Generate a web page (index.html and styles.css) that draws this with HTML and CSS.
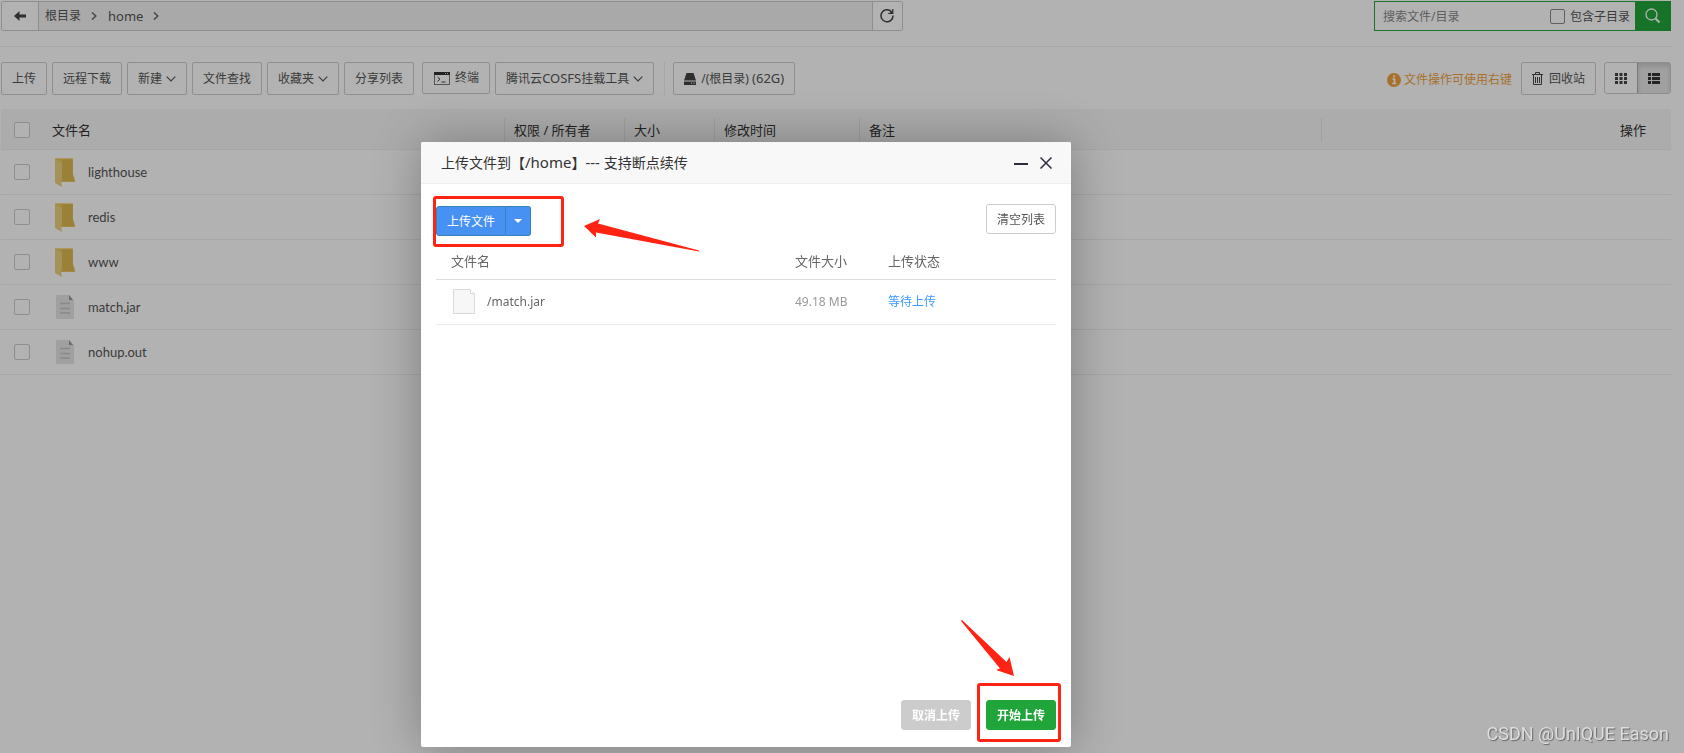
FILE: index.html
```html
<!DOCTYPE html>
<html lang="zh-CN">
<head>
<meta charset="utf-8">
<title>文件管理</title>
<link rel="stylesheet" href="styles.css">
</head>
<body>
<svg class="defs" aria-hidden="true">
  <symbol id="folder" viewBox="0 0 20 29">
    <path d="M0 0h18v16l2 6v2H6L0 22z" fill="#e9c75d"/>
    <path d="M7 1.500h10.500v15l1.500 6.500H7z" fill="#dfb84f"/>
    <path d="M0 1l7 4v15l-1 3 1 6L0 25z" fill="#ecd27f"/>
    <path d="M0 0h18v1H0z" fill="#f5dc8c"/>
  </symbol>
  <symbol id="doc" viewBox="0 0 18 24">
    <path d="M0 0h13l5 5v19H0z" fill="#e6e6e6"/>
    <path d="M13 0l4 5h-4z" fill="#999"/>
    <path d="M4 8.500h10M4 13.500h10M4 18h10" stroke="#c4c4c4" stroke-width="1.500"/>
  </symbol>
  <symbol id="down" viewBox="0 0 10 6"><path d="M.7.7L5 5 9.300.7" fill="none" stroke="#555" stroke-width="1.200"/></symbol>
  <symbol id="next" viewBox="0 0 6 8"><path d="M1 .5L4.800 4 1 7.500" fill="none" stroke="#666" stroke-width="1.500"/></symbol>
</svg>
<div class="page">
  <header class="topbar">
    <nav class="path">
      <button class="path-btn back" aria-label="后退"><svg width="12" height="10" viewBox="0 0 12 10"><path d="M0 5l5.500-5v3.500H12v3H5.500V10z" fill="#444"/></svg></button>
      <div class="crumbs">
        <a href="#">根目录</a><svg width="6" height="8"><use href="#next"/></svg>
        <a href="#" class="home">home</a><svg width="6" height="8"><use href="#next"/></svg>
      </div>
      <button class="path-btn refresh" aria-label="刷新"><svg width="14" height="14" viewBox="0 0 14 14"><path d="M11.200 2.500A6 6 0 1 0 13 6.500" fill="none" stroke="#444" stroke-width="1.500"/><path d="M12.800 0v4.500H8.200" fill="none" stroke="#444" stroke-width="1.200"/><path d="M12.500 1v3H9.500z" fill="#444"/></svg></button>
    </nav>
    <form class="search">
      <input type="text" class="search-text" placeholder="搜索文件/目录" aria-label="搜索文件/目录">
      <label class="search-sub"><input type="checkbox" class="check">包含子目录</label>
      <button type="button" class="search-btn" aria-label="搜索"><svg width="16" height="16" viewBox="0 0 16 16" fill="none" stroke="#fff"><circle cx="6.500" cy="6.500" r="5.500" stroke-width="1.300"/><path d="M10.500 10.500L14.500 14.500" stroke-width="2"/></svg></button>
    </form>
  </header>

  <div class="toolbar">
    <div class="tools">
      <button class="btn">上传</button>
      <button class="btn">远程下载</button>
      <button class="btn">新建<svg width="10" height="6"><use href="#down"/></svg></button>
      <button class="btn">文件查找</button>
      <button class="btn">收藏夹<svg width="10" height="6"><use href="#down"/></svg></button>
      <button class="btn">分享列表</button>
      <button class="btn terminal"><svg width="16" height="13" viewBox="0 0 16 13"><rect x=".5" y=".5" width="15" height="12" fill="none" stroke="#777"/><path d="M0 0h16v3H0z" fill="#333"/><path d="M3.500 5l2.500 2.200-2.500 2.200M7.500 10h4" fill="none" stroke="#444"/><path d="M11 1.500h3" stroke="#ccc" stroke-dasharray="1 1"/></svg>终端</button>
      <button class="btn"><span>腾讯云<span class="latin">COSFS</span>挂载工具</span><svg width="10" height="6"><use href="#down"/></svg></button>
      <span class="divider"></span>
      <button class="btn disk"><svg width="12" height="12" viewBox="0 0 12 12" fill="#444"><path d="M2.500 0h7L12 7.500H0z"/><path d="M0 8.500h12V12H0z"/><path d="M7 10.200h1.200M9.500 10.200h1.200" stroke="#fff"/></svg><span>/(根目录) <span class="latin">(62G)</span></span></button>
    </div>
    <div class="tools-right">
      <span class="tip"><svg width="14" height="14" viewBox="0 0 14 14"><circle cx="7" cy="7" r="7" fill="#f0a33f"/><path d="M5.500 6h2v4.500M5.200 10.500h4M6 3.300h2" stroke="#fff" stroke-width="1.700" fill="none"/></svg>文件操作可使用右键</span>
      <button class="btn recycle"><svg width="11" height="13" viewBox="0 0 11 13" fill="none" stroke="#444"><path d="M0 2.500h11M3.500 2V.5h4V2M1.500 3v9.500h8V3M3.500 5v6M5.500 5v6M7.500 5v6"/></svg>回收站</button>
      <div class="views">
        <button class="view" aria-label="图标"><svg width="12" height="11" viewBox="0 0 12 11" fill="#444"><path d="M0 0h3v3H0zM4.500 0h3v3h-3zM9 0h3v3H9zM0 4h3v3H0zM4.500 4h3v3h-3zM9 4h3v3H9zM0 8h3v3H0zM4.500 8h3v3h-3zM9 8h3v3H9z"/></svg></button>
        <button class="view active" aria-label="列表"><svg width="12" height="11" viewBox="0 0 12 11" fill="#333"><path d="M0 0h3v3H0zM4 0h8v3H4zM0 4h3v3H0zM4 4h8v3H4zM0 8h3v3H0zM4 8h8v3H4z"/></svg></button>
      </div>
    </div>
  </div>

  <table class="files">
    <colgroup><col class="c-check"><col><col class="c-owner"><col class="c-size"><col class="c-time"><col><col class="c-ops"></colgroup>
    <thead>
      <tr>
        <th><input type="checkbox" class="check" aria-label="全选"></th>
        <th class="name-head">文件名</th>
        <th><div class="head">权限 / 所有者</div></th>
        <th><div class="head">大小</div></th>
        <th><div class="head">修改时间</div></th>
        <th><div class="head">备注</div></th>
        <th><div class="head ops">操作</div></th>
      </tr>
    </thead>
    <tbody>
      <tr><td><input type="checkbox" class="check" aria-label="lighthouse"></td><td colspan="6"><div class="file"><svg class="folder" width="20" height="29"><use href="#folder"/></svg><span>lighthouse</span></div></td></tr>
      <tr><td><input type="checkbox" class="check" aria-label="redis"></td><td colspan="6"><div class="file"><svg class="folder" width="20" height="29"><use href="#folder"/></svg><span>redis</span></div></td></tr>
      <tr><td><input type="checkbox" class="check" aria-label="www"></td><td colspan="6"><div class="file"><svg class="folder" width="20" height="29"><use href="#folder"/></svg><span>www</span></div></td></tr>
      <tr><td><input type="checkbox" class="check" aria-label="match.jar"></td><td colspan="6"><div class="file"><svg width="20" height="24"><use href="#doc"/></svg><span>match.jar</span></div></td></tr>
      <tr><td><input type="checkbox" class="check" aria-label="nohup.out"></td><td colspan="6"><div class="file"><svg width="20" height="24"><use href="#doc"/></svg><span>nohup.out</span></div></td></tr>
    </tbody>
  </table>
</div>

<div class="mask"></div>

<section class="dialog" role="dialog" aria-labelledby="dialog-title">
  <div class="dialog-head">
    <h2 id="dialog-title">上传文件到【<span class="title-latin">/home</span>】<span class="title-latin">--- </span>支持断点续传</h2>
    <button class="icon-btn" aria-label="最小化"><svg width="14" height="12" viewBox="0 0 14 12"><path d="M0 7h14" stroke="#2e2d3c" stroke-width="2"/></svg></button>
    <button class="icon-btn" aria-label="关闭"><svg width="12" height="12" viewBox="0 0 12 12"><path d="M.5.5l11 11M11.500.5l-11 11" stroke="#2e2d3c" stroke-width="1.500"/></svg></button>
  </div>
  <div class="dialog-body">
    <div class="actions">
      <div class="split"><button class="blue">上传文件</button><button class="blue caret" aria-label="更多"><svg width="8" height="4"><path d="M0 0h8L4 4z" fill="#fff"/></svg></button></div>
      <button class="small clear">清空列表</button>
    </div>
    <table class="uploads">
      <colgroup><col><col class="u-size"><col class="u-state"></colgroup>
      <thead><tr><th class="u-name">文件名</th><th>文件大小</th><th>上传状态</th></tr></thead>
      <tbody><tr>
        <td><div class="upload-file"><svg width="22" height="25" viewBox="0 0 22 25"><path d="M.5.5h17l4 4v20H.5z" fill="#f7f7f7" stroke="#d8d8d8"/><path d="M17.500.5v4h4" fill="#fff" stroke="#d8d8d8"/></svg><span>/match.jar</span></div></td>
        <td class="muted">49.18 MB</td><td class="waiting">等待上传</td>
      </tr></tbody>
    </table>
  </div>
  <div class="dialog-foot">
    <button class="small cancel">取消上传</button>
    <button class="small start">开始上传</button>
  </div>
  <span class="mark mark-upload"></span>
  <span class="mark mark-start"></span>
  <svg class="arrow arrow-upload" width="115" height="33" viewBox="0 0 115 33"><path d="M0 7L16 0 14 4.500 115 31.500v1L12 13.500v5z" fill="#ff2313"/></svg>
  <svg class="arrow arrow-start" width="53" height="56" viewBox="0 0 53 56"><path d="M53 56L35 50l4-1.500L0 1 1 0 45.500 42 48.500 37z" fill="#ff2313"/></svg>
</section>
<div class="watermark">CSDN @UnIQUE Eason</div>
</body>
</html>
```
FILE: styles.css
```css
* { box-sizing: border-box; }
body {
  margin: 0;
  min-height: 100vh;
  background: #fff;
  color: #555;
  font: 12px/20px "Noto Sans", "Noto Sans CJK SC", sans-serif;
}
button, input { font: inherit; color: inherit; margin: 0; padding: 0; }
button { background: none; border: 0; white-space: nowrap; }
a { color: inherit; text-decoration: none; }
svg { flex: none; }
.defs { position: absolute; width: 0; height: 0; }
.page { padding: 1px 13px 0 1px; }
.latin { font-size: 13px; }

.check {
  appearance: none;
  display: block;
  flex: none;
  width: 16px;
  height: 16px;
  border: 1px solid #ccc;
  border-radius: 2px;
  background: #fff;
}

.topbar {
  display: flex;
  justify-content: space-between;
  padding-bottom: 15px;
  border-bottom: 1px solid #eee;
}
.path {
  display: flex;
  width: 54%;
  height: 30px;
  border: 1px solid #ccc;
  border-radius: 2px;
  background: #f3f3f3;
}
.path-btn { display: flex; align-items: center; justify-content: center; background: #fff; }
.back { width: 37px; border-right: 1px solid #ccc; }
.refresh { width: 30px; border-left: 1px solid #ccc; }
.crumbs { flex: 1; display: flex; align-items: center; gap: 10px; padding-left: 6px; }
.home { font-size: 13px; margin-left: 1px; }
.search { display: flex; width: 297px; height: 30px; border: 1px solid #20a53a; }
.search-text { flex: 1; min-width: 0; border: 0; padding: 2px 0 0 8px; background: none; }
.search-text::placeholder { color: #888; opacity: 1; }
.search-sub { display: flex; align-items: center; gap: 5px; padding: 1px 5px 0 0; }
.search-sub .check { width: 15px; height: 15px; border-color: #888; }
.search-btn { display: flex; align-items: center; justify-content: center; width: 35px; background: #20a53a; }

.toolbar { display: flex; justify-content: space-between; padding: 15px 0 14px; }
.tools, .tools-right { display: flex; align-items: flex-start; gap: 5px; }
.btn {
  display: flex;
  align-items: center;
  gap: 4px;
  height: 33px;
  padding: 0 10px;
  border: 1px solid #ccc;
  border-radius: 2px;
  background: #fff;
}
.terminal { height: 32px; margin-left: 3px; padding-left: 11px; gap: 5px; }
.divider { width: 1px; height: 33px; margin: 0 3px 0 5px; background: #eee; }
.disk { gap: 5px; }
.tip { display: flex; align-items: center; gap: 3px; height: 33px; padding-top: 2px; margin-right: 4px; color: #f0a33f; }
.recycle { gap: 6px; }
.views { display: flex; width: 67px; height: 32px; margin-left: 3px; border: 1px solid #ccc; border-radius: 3px; }
.view { flex: 1; display: flex; align-items: center; justify-content: center; }
.view.active { background: #e6e6e6; border-left: 1px solid #adadad; box-shadow: inset 0 3px 5px rgba(0, 0, 0, .13); }

table { width: 100%; border-collapse: collapse; table-layout: fixed; font-size: 13px; }
th, td { padding: 0; text-align: left; font-weight: 400; }
.files tr { border-bottom: 1px solid #eee; height: 45px; }
.files thead tr { height: 40px; background: #f7f7f7; color: #333; }
.c-check { width: 41px; }
.c-owner { width: 120px; }
.c-size { width: 90px; }
.c-time { width: 145px; }
.c-ops { width: 350px; }
.files .check { margin-left: 13px; }
.name-head { padding-left: 10px; }
.files thead th { padding-top: 2px; }
.head { border-left: 1px solid #e6e6e6; padding-left: 9px; line-height: 24px; }
.ops { padding-right: 25px; text-align: right; }
.file { display: flex; align-items: center; gap: 13px; padding-left: 13px; font-family: Lato, "Noto Sans CJK SC", sans-serif; }
.folder { margin-top: 2px; }

.mask { position: fixed; inset: 0; background: rgba(0, 0, 0, .3); }

.dialog {
  position: absolute;
  left: 25%;
  top: 142px;
  display: flex;
  flex-direction: column;
  width: 650px;
  min-height: 605px;
  border-radius: 2px;
  background: #fff;
  box-shadow: 1px 1px 50px rgba(0, 0, 0, .3);
}
.dialog-head {
  display: flex;
  align-items: center;
  gap: 12px;
  height: 42px;
  padding: 0 19px 0 20px;
  border-bottom: 1px solid #eee;
  border-radius: 2px 2px 0 0;
  background: #f8f8f8;
}
.dialog-head h2 { flex: 1; margin: 0; color: #333; font-size: 14px; font-weight: 400; }
.title-latin { font-size: 15px; }
.icon-btn { display: flex; }
.dialog-body { flex: 1; padding: 20px 15px; }
.actions { display: flex; justify-content: space-between; align-items: flex-start; }
.split { display: flex; margin-top: 2px; }
.blue {
  height: 30px;
  padding: 1px 10px 0;
  border: 1px solid #3582bd;
  border-radius: 3px 0 0 3px;
  background: #4791f2;
  color: #fff;
}
.caret { display: flex; align-items: center; padding: 0 8px; border-left: 0; border-radius: 0 3px 3px 0; }
.small { height: 30px; padding: 1px 10px 0; border: 1px solid #ccc; border-radius: 3px; }
.uploads { margin-top: 7px; color: #666; }
.uploads tr { height: 45px; border-bottom: 1px solid #eaeaea; }
.uploads thead tr { height: 36px; border-color: #ddd; }
.u-size { width: 93px; }
.u-state { width: 168px; }
.u-name { padding-left: 15px; }
.upload-file { display: flex; align-items: center; gap: 12px; padding-left: 17px; font-size: 12px; }
.muted { color: #999; font-size: 12px; }
.waiting { color: #3d9bff; font-size: 12px; }
.dialog-foot { display: flex; justify-content: flex-end; gap: 15px; padding: 0 15px 17px; }
.cancel, .start { color: #fff; font-weight: 700; }
.cancel { background: #ccc; }
.start { background: #20a53a; border-color: #20a53a; }

.mark { position: absolute; border: 3px solid #ff2313; border-radius: 3px; }
.mark-upload { left: 12px; top: 54px; width: 131px; height: 51px; }
.mark-start { right: 10px; bottom: 5px; width: 84px; height: 59px; }
.arrow { position: absolute; }
.arrow-upload { left: 163px; top: 77px; }
.arrow-start { left: 540px; top: 478px; }

.watermark {
  position: fixed;
  right: 15px;
  bottom: 8px;
  color: #ddd;
  font: 18px/22px Roboto, sans-serif;
  text-shadow: 1px 1px 1px #666;
}
```
